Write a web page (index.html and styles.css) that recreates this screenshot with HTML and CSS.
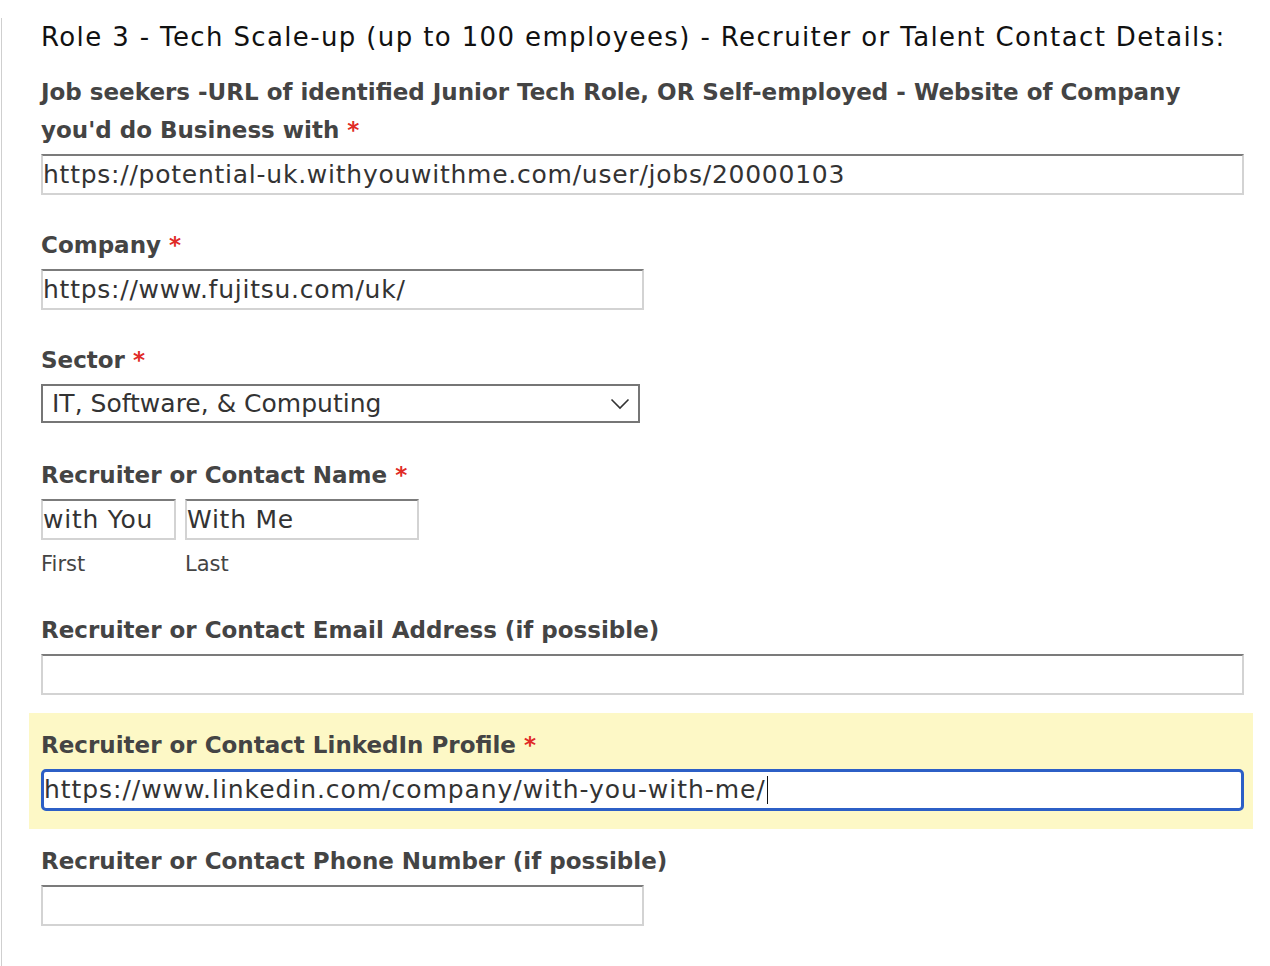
FILE: index.html
```html
<!DOCTYPE html>
<html lang="en">
<head>
<meta charset="utf-8">
<title>Role 3 - Recruiter or Talent Contact Details</title>
<link rel="stylesheet" href="styles.css">
</head>
<body>
<div class="page">
  <form class="form">
    <h3 class="form-title">Role 3 - Tech Scale-up (up to 100 employees) - Recruiter or Talent Contact Details:</h3>

    <div class="field">
      <label class="field-label">Job seekers -URL of identified Junior Tech Role, OR Self-employed - Website of Company you'd do Business with <span class="req">*</span></label>
      <input class="text-input full" type="text" value="https://potential-uk.withyouwithme.com/user/jobs/20000103">
    </div>

    <div class="field">
      <label class="field-label">Company <span class="req">*</span></label>
      <input class="text-input half" type="text" value="https://www.fujitsu.com/uk/">
    </div>

    <div class="field">
      <label class="field-label">Sector <span class="req">*</span></label>
      <div class="select">
        <span class="select-value">IT, Software, &amp; Computing</span>
        <svg class="chevron" width="20" height="12" viewBox="0 0 20 12" aria-hidden="true"><path d="M1.5 1.5 L10 10 L18.5 1.5" fill="none" stroke="#333" stroke-width="1.6"/></svg>
      </div>
    </div>

    <div class="field">
      <label class="field-label">Recruiter or Contact Name <span class="req">*</span></label>
      <div class="name-row">
        <span class="name-part first">
          <input class="text-input" type="text" value="with You">
          <span class="sub-label">First</span>
        </span>
        <span class="name-part last">
          <input class="text-input" type="text" value="With Me">
          <span class="sub-label">Last</span>
        </span>
      </div>
    </div>

    <div class="field">
      <label class="field-label">Recruiter or Contact Email Address (if possible)</label>
      <input class="text-input full" type="text" value="">
    </div>

    <div class="field highlighted">
      <label class="field-label">Recruiter or Contact LinkedIn Profile <span class="req">*</span></label>
      <div class="text-input full focused" role="textbox">https://www.linkedin.com/company/with-you-with-me/<span class="caret"></span></div>
    </div>

    <div class="field">
      <label class="field-label">Recruiter or Contact Phone Number (if possible)</label>
      <input class="text-input half" type="text" value="">
    </div>
  </form>
</div>
</body>
</html>
```

FILE: styles.css
```css
html, body {
  margin: 0;
  padding: 0;
  background: #fff;
}

body {
  font-family: "DejaVu Sans", "Liberation Sans", sans-serif;
  color: #444;
}

.page {
  margin-left: 1px;
  border-left: 1px solid #cfcfcf;
  min-height: 966px;
  padding-left: 27px;
  box-sizing: border-box;
}

.form {
  width: 1224px;
}

.form-title {
  margin: 18px 0 4px;
  padding-left: 12px;
  font-size: 26px;
  line-height: 38px;
  font-weight: normal;
  letter-spacing: 1.37px;
  color: #111;
}

.field {
  padding: 13px 9px 18px 12px;
  margin: 0;
}

.field.highlighted {
  background: #fdf8c6;
}

.field-label {
  display: block;
  font-size: 23px;
  line-height: 38px;
  font-weight: bold;
  color: #444;
  margin-bottom: 5px;
}

.req {
  color: #e02b27;
}

.text-input {
  display: block;
  box-sizing: border-box;
  height: 41px;
  margin: 0;
  padding: 0;
  border: 2px solid #d3d3d3;
  border-top-color: #7b7b7b;
  border-radius: 0;
  background: #fff;
  font-family: "DejaVu Sans", "Liberation Sans", sans-serif;
  font-size: 25px;
  line-height: 37px;
  letter-spacing: 0.75px;
  color: #333;
  outline: none;
}

.text-input.full {
  width: 1203px;
}

.text-input.half {
  width: 603px;
}

.text-input.focused {
  height: 42px;
  border: 3px solid #2c5fc6;
  border-radius: 5px;
  padding: 0;
  line-height: 36px;
  white-space: nowrap;
  letter-spacing: 0.95px;
}

.caret {
  display: inline-block;
  width: 1px;
  height: 28px;
  background: #111;
  vertical-align: -6px;
  margin-left: 1px;
}

.select {
  display: flex;
  align-items: center;
  justify-content: space-between;
  box-sizing: border-box;
  width: 599px;
  height: 39px;
  margin-bottom: 2px;
  padding: 0 8px 0 9px;
  border: 2px solid #767676;
  background: #fff;
  font-size: 25px;
  color: #333;
}

.chevron {
  display: block;
}

.name-row {
  display: flex;
  gap: 9px;
}

.name-part {
  display: flex;
  flex-direction: column;
}

.name-part.first .text-input {
  width: 135px;
}

.name-part.last .text-input {
  width: 234px;
}

.sub-label {
  display: block;
  margin-top: 10px;
  margin-bottom: 2px;
  font-size: 21px;
  line-height: 28px;
  color: #444;
}
```
